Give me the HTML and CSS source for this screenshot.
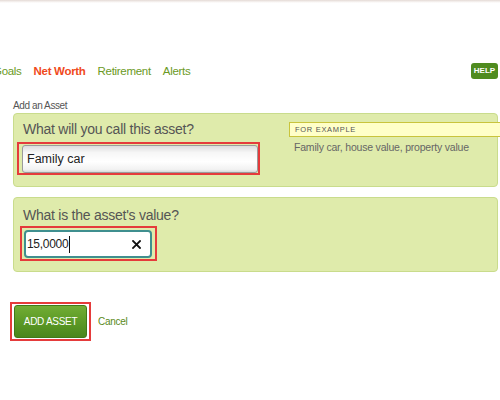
FILE: index.html
```html
<!DOCTYPE html>
<html>
<head>
  <link rel="stylesheet" href="styles.css">
</head>
<body>
  <div id="topBar"></div>

  <div id="nav">
    <div class="nav-links">
      <a href="#">Goals</a>
      <a href="#" class="active">Net Worth</a>
      <a href="#">Retirement</a>
      <a href="#">Alerts</a>
    </div>
    <span class="help">HELP</span>
  </div>

  <div id="content">
    <div class="page-title">Add an Asset</div>

    <div class="panel panel-name">
      <div class="field">
        <div class="question">What will you call this asset?</div>
        <div class="highlight highlight-name">
          <div class="text-box">Family car</div>
        </div>
      </div>
      <div class="hint">
        <div class="hint-title">FOR EXAMPLE</div>
        <div class="hint-text">Family car, house value, property value</div>
      </div>
    </div>

    <div class="panel panel-value">
      <div class="field">
        <div class="question">What is the asset's value?</div>
        <div class="highlight highlight-value">
          <div class="text-box focused">
            <span class="value">15,0000</span><span class="caret"></span>
            <svg class="clear" width="9" height="9" viewBox="0 0 9 9">
              <path d="M1 1 L8 8 M8 1 L1 8" stroke="#111" stroke-width="1.8" stroke-linecap="square"/>
            </svg>
          </div>
        </div>
      </div>
    </div>

    <div class="actions">
      <div class="highlight highlight-button">
        <button type="button">ADD ASSET</button>
      </div>
      <a href="#" class="cancel">Cancel</a>
    </div>
  </div>
</body>
</html>
```

FILE: styles.css
```css
body {
  font-family: "Liberation Sans", Arial, sans-serif;
  background-color: #ffffff;
  margin: 0;
  overflow: hidden;
}
#topBar {
  height: 3px;
  background: linear-gradient(#e4dad5, #f6f2f0 60%, #ffffff);
}
#nav {
  display: flex;
  justify-content: space-between;
  align-items: center;
  margin-top: 59px;
  padding-right: 2px;
  height: 17px;
}
#nav .nav-links {
  display: flex;
  gap: 12px;
  margin-left: -7px;
}
#nav a {
  font-size: 11.5px;
  letter-spacing: -0.3px;
  line-height: 16px;
  color: #6b9a25;
  text-decoration: none;
}
#nav a.active {
  color: #f04a1c;
  font-weight: bold;
}
.help {
  background-color: #4f8b1f;
  color: #ffffff;
  font-size: 8px;
  font-weight: bold;
  line-height: 16px;
  width: 27px;
  text-align: center;
  border-radius: 3px;
}
#content {
  padding: 0 2px 0 13px;
}
.page-title {
  margin-top: 21px;
  font-size: 10px;
  letter-spacing: -0.4px;
  line-height: 12px;
  color: #555555;
  margin-bottom: 1px;
}
.panel {
  display: flex;
  background-color: #dfebab;
  border: 1px solid #c9dc8c;
  border-radius: 4px;
  padding: 7px 0 11px 9px;
}
.panel-value {
  margin-top: 10px;
  padding-top: 9px;
  padding-bottom: 10px;
}
.field {
  width: 266px;
}
.question {
  font-size: 14px;
  letter-spacing: -0.25px;
  line-height: 17px;
  color: #555555;
}
.highlight {
  border: 2px solid #e53b3b;
  box-sizing: border-box;
}
.highlight-name {
  width: 243px;
  height: 33px;
  margin: 4px 0 0 -6px;
  padding: 1px 0 0 3px;
}
.highlight-value {
  width: 137px;
  height: 35px;
  margin: 2px 0 0 -3px;
  padding: 2px 0 0 2px;
}
.text-box {
  display: flex;
  align-items: center;
  box-sizing: border-box;
  height: 28px;
  padding-left: 4px;
  border: 1px solid #9b9b9b;
  border-radius: 3px;
  background: linear-gradient(#dcdcdc, #f6f6f6 25%, #ffffff 60%, #f2f2f2 90%, #d8d8d8);
  font-size: 12.5px;
  color: #222222;
}
.text-box.focused {
  width: 128px;
  border: 2px solid #3f8f8f;
  border-radius: 4px;
  background: #ffffff;
  padding-left: 1px;
  font-size: 12px;
  letter-spacing: -0.3px;
}
.caret {
  width: 1px;
  height: 17px;
  background-color: #111111;
  margin-left: 1px;
}
.clear {
  margin-left: auto;
  margin-right: 9px;
}
.hint {
  flex: 1;
  margin: 1px -15px 0 0;
}
.hint-title {
  height: 15px;
  box-sizing: border-box;
  border: 1px solid #c9c43c;
  background-color: #ffffc8;
  font-size: 7.5px;
  letter-spacing: 0.7px;
  line-height: 13px;
  color: #555555;
  padding-left: 5px;
}
.hint-text {
  margin-top: 3px;
  padding-left: 5px;
  font-size: 10.5px;
  letter-spacing: -0.2px;
  line-height: 14px;
  color: #666666;
}
.actions {
  display: flex;
  align-items: center;
  margin: 30px 0 0 -3px;
}
.highlight-button {
  width: 81px;
  height: 39px;
  padding: 1px 0 0 2px;
}
.actions button {
  width: 73px;
  height: 33px;
  background: linear-gradient(#72ad34, #5c9a26 50%, #4a861c);
  border: 1px solid #3f7a18;
  border-radius: 3px;
  color: #ffffff;
  font-family: "Liberation Sans", Arial, sans-serif;
  font-size: 10px;
  letter-spacing: -0.3px;
  padding: 0;
}
.cancel {
  margin-left: 7px;
  font-size: 10px;
  letter-spacing: -0.3px;
  color: #5a8a1a;
  text-decoration: none;
}
```
